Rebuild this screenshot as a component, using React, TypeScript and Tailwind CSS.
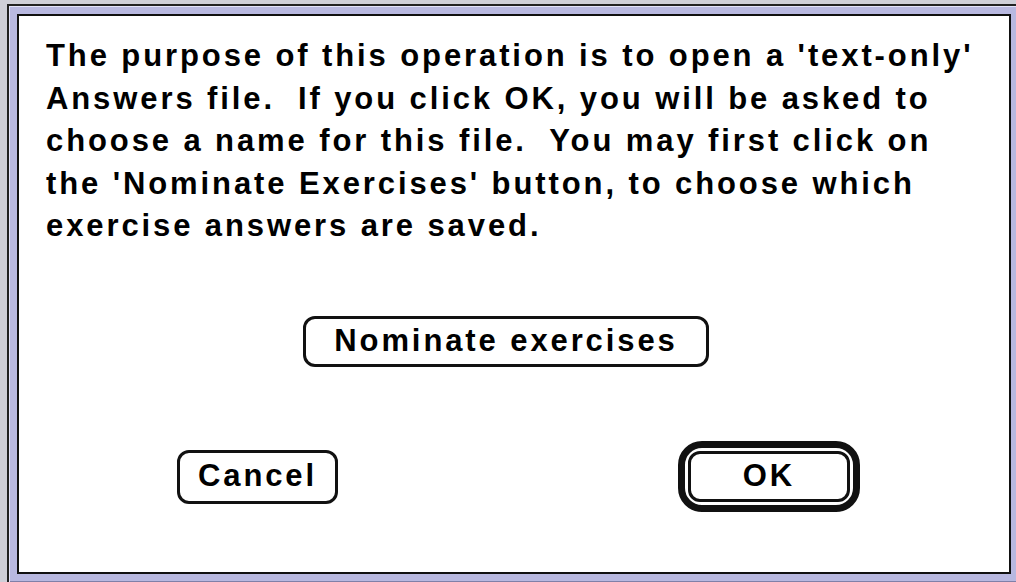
import React from 'react'

const lines = [
  "The purpose of this operation is to open a 'text-only'",
  'Answers file.  If you click OK, you will be asked to',
  'choose a name for this file.  You may first click on',
  "the 'Nominate Exercises' button, to choose which",
  'exercise answers are saved.',
]

const font = "font-['Liberation_Sans',Arial,sans-serif] font-bold text-[31px] tracking-[2.9px] text-black"

function PushButton({ label, className }: { label: string; className: string }) {
  return (
    <div
      className={`flex items-center justify-center rounded-[12px] border-[3px] border-[#111] bg-white ${font} ${className}`}
    >
      {label}
    </div>
  )
}

export default function App() {
  return (
    <div className="h-[582px] w-[1016px] overflow-hidden bg-[#cfcfd8] pl-[7px] pt-[4px]">
      {/* window frame: dark rule, lavender band, dark rule */}
      <div className="w-[1020px] border-2 border-[#222] bg-[#b8b8e0] p-[8px] shadow-[inset_1px_1px_0_#e4e4fa,inset_-1px_-1px_0_#8080a8]">
        <div className="h-[560px] w-[994px] border-2 border-[#111] bg-white">
          <div className={`${font} whitespace-pre pl-[27px] pt-[19px] leading-[42.5px]`}>
            {lines.map((l) => (
              <div key={l}>{l}</div>
            ))}
          </div>

          <PushButton label="Nominate exercises" className="ml-[284px] mt-[68px] h-[51px] w-[406px]" />

          <div className="mt-[74px] flex items-start">
            <PushButton label="Cancel" className="ml-[158px] mt-[9px] h-[54px] w-[161px]" />
            {/* default button with its heavy outline */}
            <div className="ml-[340px] rounded-[24px] border-[7px] border-[#111] p-[3px]">
              <PushButton label="OK" className="h-[51px] w-[162px]" />
            </div>
          </div>
        </div>
      </div>
    </div>
  )
}
